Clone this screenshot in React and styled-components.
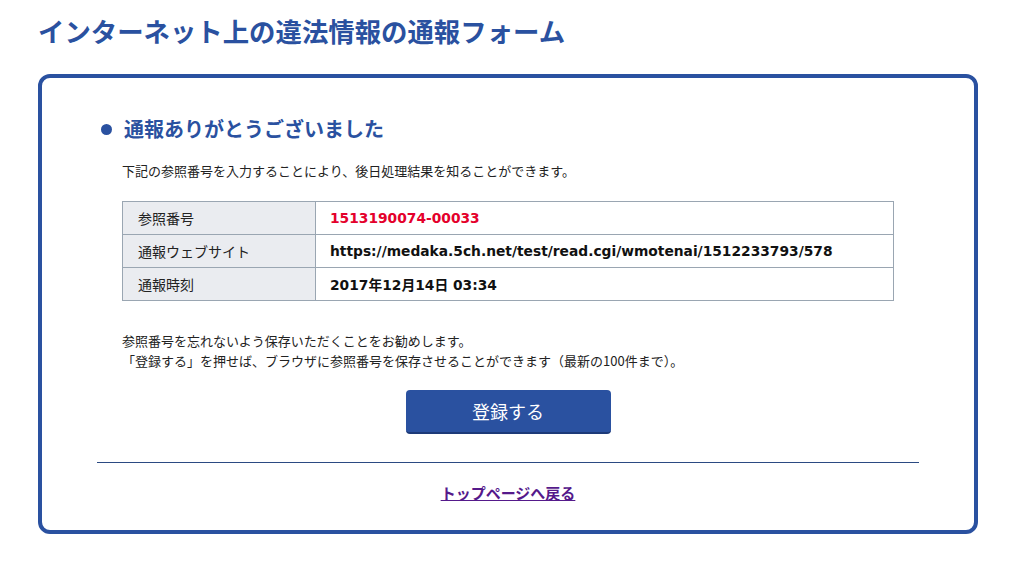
import styled, { createGlobalStyle } from "styled-components";

const GlobalStyle = createGlobalStyle`
  body {
    margin: 0;
    background: #fff;
    font-family: "Noto Sans CJK JP", "DejaVu Sans", sans-serif;
    color: #222;
  }
`;

const BLUE = "#2a51a0";

export default function App() {
  return (
    <>
      <GlobalStyle />
      <Page>
        <Title>インターネット上の違法情報の通報フォーム</Title>
        <Box>
          <Heading>
            <Bullet />
            通報ありがとうございました
          </Heading>
          <Indent>
            <Lead>下記の参照番号を入力することにより、後日処理結果を知ることができます。</Lead>
            <Table>
              <tbody>
                <tr>
                  <Label>参照番号</Label>
                  <Value red>1513190074-00033</Value>
                </tr>
                <tr>
                  <Label>通報ウェブサイト</Label>
                  <Value>https://medaka.5ch.net/test/read.cgi/wmotenai/1512233793/578</Value>
                </tr>
                <tr>
                  <Label>通報時刻</Label>
                  <Value>2017年12月14日 03:34</Value>
                </tr>
              </tbody>
            </Table>
            <Note>
              参照番号を忘れないよう保存いただくことをお勧めします。
              <br />
              「登録する」を押せば、ブラウザに参照番号を保存させることができます（最新の100件まで）。
            </Note>
          </Indent>
          <ButtonRow>
            <Button>登録する</Button>
          </ButtonRow>
          <Divider />
          <LinkRow>
            <BackLink href="#">トップページへ戻る</BackLink>
          </LinkRow>
        </Box>
      </Page>
    </>
  );
}

const Page = styled.div`
  padding: 13px 37px 0 38px;
`;

const Title = styled.h1`
  margin: 0;
  font-size: 26.4px;
  line-height: 36px;
  font-weight: 700;
  color: ${BLUE};
`;

const Box = styled.div`
  margin-top: 25px;
  border: 4px solid ${BLUE};
  border-radius: 12px;
  padding: 37px 55px 27px;
  width: 940px;
  box-sizing: border-box;
`;

const Heading = styled.h2`
  display: flex;
  align-items: center;
  gap: 12px;
  margin: 0 0 0 4px;
  font-size: 20px;
  line-height: 28px;
  font-weight: 700;
  color: ${BLUE};
`;

const Bullet = styled.span`
  width: 11px;
  height: 11px;
  border-radius: 50%;
  background: ${BLUE};
  flex-shrink: 0;
`;

const Indent = styled.div`
  padding: 0 25px;
`;

const Lead = styled.p`
  margin: 18px 0 0;
  font-size: 13px;
  line-height: 20px;
`;

const Table = styled.table`
  margin-top: 20px;
  width: 100%;
  border-collapse: collapse;
`;

const Label = styled.th`
  width: 193px;
  height: 32px;
  padding: 0 0 0 15px;
  text-align: left;
  font-size: 14px;
  font-weight: 400;
  background: #eaecf0;
  border: 1px solid #9aa6b2;
  box-sizing: border-box;
`;

const Value = styled.td`
  height: 32px;
  padding: 0 0 0 14px;
  font-family: "DejaVu Sans", "Noto Sans CJK JP", sans-serif;
  font-size: 13.8px;
  font-weight: 700;
  color: ${(p) => (p.red ? "#e4002b" : "#111")};
  border: 1px solid #9aa6b2;
`;

const Note = styled.p`
  margin: 30px 0 0;
  font-size: 13px;
  line-height: 20px;
`;

const ButtonRow = styled.div`
  display: flex;
  justify-content: center;
  margin-top: 19px;
`;

const Button = styled.button`
  width: 205px;
  height: 44px;
  border: none;
  border-bottom: 2px solid #1d3a78;
  border-radius: 4px;
  background: ${BLUE};
  color: #fff;
  font-family: "Noto Sans CJK JP", sans-serif;
  font-size: 18px;
  cursor: pointer;
`;

const Divider = styled.hr`
  margin: 28px 0 0;
  border: none;
  border-top: 1px solid #2b4a82;
`;

const LinkRow = styled.div`
  display: flex;
  justify-content: center;
  margin-top: 20px;
`;

const BackLink = styled.a`
  font-size: 15px;
  line-height: 20px;
  font-weight: 700;
  color: #551a8b;
  text-decoration: underline;
`;
